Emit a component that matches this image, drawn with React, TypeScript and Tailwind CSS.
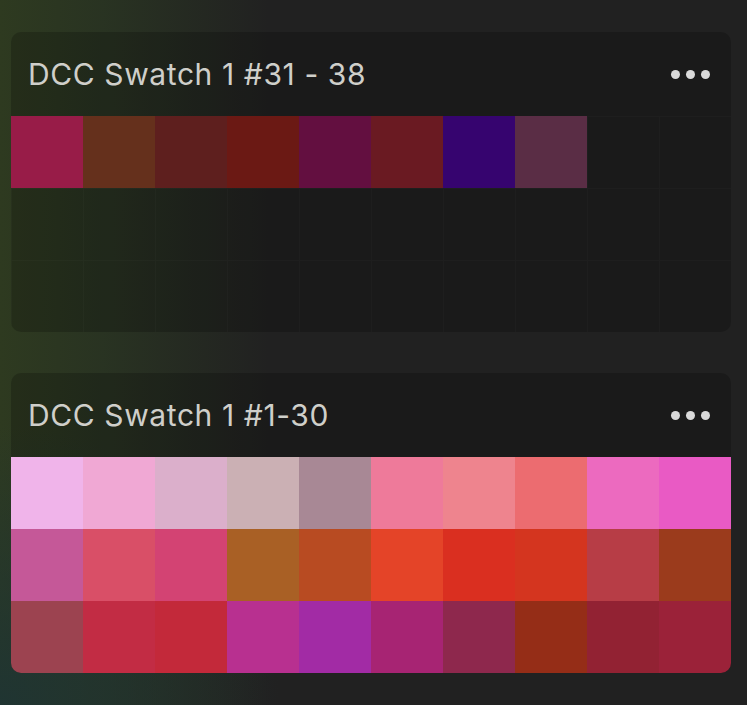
import React from "react";

const swatchesA = ["#981c48", "#65301c", "#5e1f1e", "#6b1914", "#630f40", "#6a1a22", "#36046f", "#5a2d45"];

const swatchesB = [
  "#f0b4ea", "#f0a8d4", "#dbafcb", "#cbb0b4", "#a88895", "#ee7a9a", "#ee848e", "#ec6c70", "#ec6abf", "#e95ac4",
  "#c55898", "#d94f67", "#d34373", "#a96025", "#b84b22", "#e44428", "#da2f20", "#d4351f", "#b73d46", "#9b3b1c",
  "#9c4350", "#c22c44", "#c3293a", "#b83090", "#a22ba5", "#a72473", "#8e284d", "#952d17", "#922233", "#9b2239",
];

const Dots = () => (
  <div className="flex items-center gap-[6px]">
    {[0, 1, 2].map((i) => (
      <span key={i} className="h-[9px] w-[9px] rounded-full bg-[#d9d9d9]" />
    ))}
  </div>
);

const SwatchCard = ({ title, colors }: { title: string; colors: string[] }) => {
  const cells = Array.from({ length: 30 }, (_, i) => colors[i]);
  return (
    <div className="w-[720px] overflow-hidden rounded-[10px] bg-black/20">
      <div className="flex h-[84px] items-center justify-between pl-[17px] pr-[21px]">
        <h2 className="text-[30px] leading-none tracking-[0.6px] text-[#cfcfca]">{title}</h2>
        <Dots />
      </div>
      <div className="grid grid-cols-10">
        {cells.map((c, i) =>
          c ? (
            <div key={i} className="h-[72px]" style={{ backgroundColor: c }} />
          ) : (
            <div key={i} className="h-[72px] border-l border-t border-white/[0.02]" />
          ),
        )}
      </div>
    </div>
  );
};

export default function App() {
  return (
    <div
      className="flex h-[705px] w-[747px] flex-col gap-[41px] overflow-hidden bg-[#212121] pl-[11px] pt-[32px] bg-[radial-gradient(ellipse_280px_280px_at_0%_100%,rgba(30,52,52,0.9),transparent),linear-gradient(90deg,rgba(46,58,32,1)_0%,rgba(42,54,34,0.85)_14%,rgba(33,33,33,0)_36%)]"
      style={{ fontFamily: "Inter, 'Liberation Sans', sans-serif" }}
    >
      <SwatchCard title="DCC Swatch 1 #31 - 38" colors={swatchesA} />
      <SwatchCard title="DCC Swatch 1 #1-30" colors={swatchesB} />
    </div>
  );
}
